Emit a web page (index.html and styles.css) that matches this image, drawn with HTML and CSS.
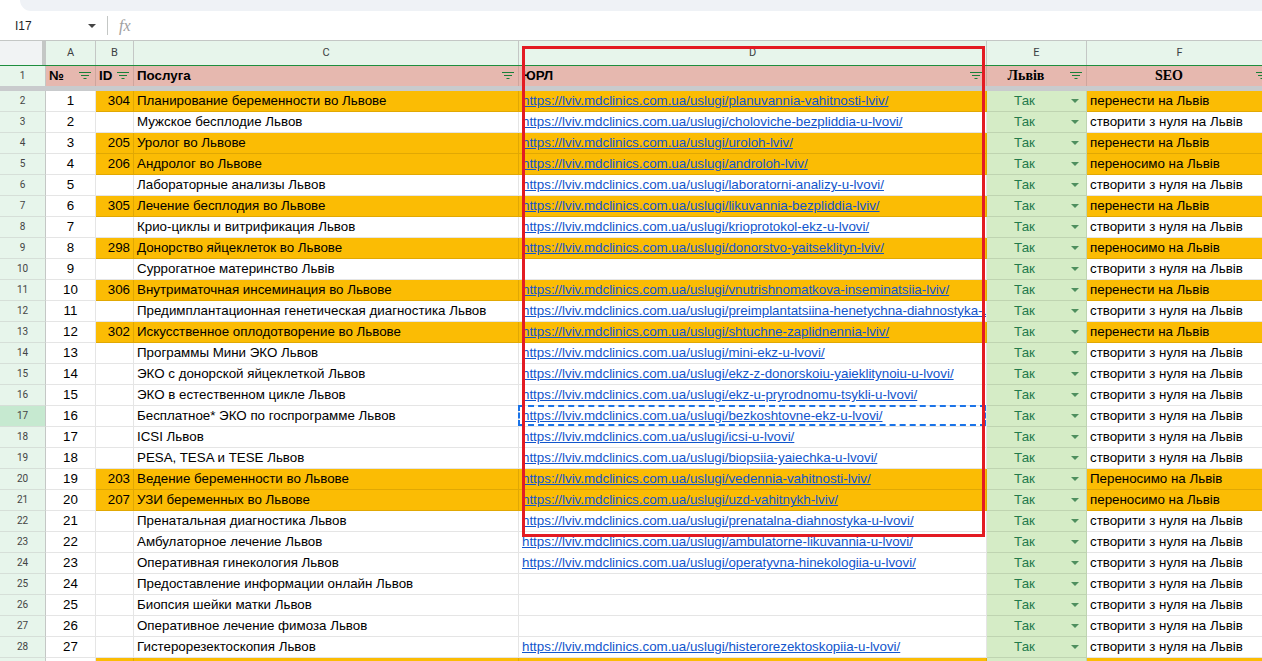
FILE: index.html
```html
<!DOCTYPE html>
<html lang="uk">
<head>
<meta charset="utf-8">
<title>Sheet</title>
<link rel="stylesheet" href="styles.css">
</head>
<body>
<div class="top"><div class="top-strip"></div></div>
<div class="formula-bar">
  <div class="name-box"><span class="cell-ref">I17</span><span class="nb-tri"></span></div>
  <div class="fb-sep"></div>
  <div class="fx">fx</div>
</div>
<div class="sheet">
  <div class="row col-head">
    <div class="corner"></div>
    <div class="ch">A</div><div class="ch">B</div><div class="ch">C</div><div class="ch">D</div><div class="ch">E</div><div class="ch">F</div>
  </div>
  <div class="row r1">
    <div class="rh">1</div>
    <div class="c hc"><span class="ht">№</span><svg class="flt" width="12" height="8" viewBox="0 0 12 8"><path d="M0 0.5H12M2 3.5H10M4.5 6.5H7.5" stroke="#188038" stroke-width="1.2"/></svg></div>
    <div class="c hc"><span class="ht">ID</span><svg class="flt" width="12" height="8" viewBox="0 0 12 8"><path d="M0 0.5H12M2 3.5H10M4.5 6.5H7.5" stroke="#188038" stroke-width="1.2"/></svg></div>
    <div class="c hc"><span class="ht">Послуга</span><svg class="flt" width="12" height="8" viewBox="0 0 12 8"><path d="M0 0.5H12M2 3.5H10M4.5 6.5H7.5" stroke="#188038" stroke-width="1.2"/></svg></div>
    <div class="c hc"><span class="ht">ЮРЛ</span><svg class="flt" width="12" height="8" viewBox="0 0 12 8"><path d="M0 0.5H12M2 3.5H10M4.5 6.5H7.5" stroke="#188038" stroke-width="1.2"/></svg></div>
    <div class="c hc"><span class="ht center serif">Львів</span><svg class="flt" width="12" height="8" viewBox="0 0 12 8"><path d="M0 0.5H12M2 3.5H10M4.5 6.5H7.5" stroke="#188038" stroke-width="1.2"/></svg></div>
    <div class="c hc"><span class="ht center serif">SEO</span><svg class="flt" width="12" height="8" viewBox="0 0 12 8"><path d="M0 0.5H12M2 3.5H10M4.5 6.5H7.5" stroke="#188038" stroke-width="1.2"/></svg></div>
  </div>
  <div class="freeze"></div>

  <div class="row o"><div class="rh">2</div><div class="c a">1</div><div class="c b">304</div><div class="c">Планирование беременности во Львове</div><div class="c d"><a>https://lviv.mdclinics.com.ua/uslugi/planuvannia-vahitnosti-lviv/</a></div><div class="c e"><span class="tak">Так</span><span class="tri"></span></div><div class="c f">перенести на Львів</div></div>
  <div class="row"><div class="rh">3</div><div class="c a">2</div><div class="c b"></div><div class="c">Мужское бесплодие Львов</div><div class="c d"><a>https://lviv.mdclinics.com.ua/uslugi/choloviche-bezpliddia-u-lvovi/</a></div><div class="c e"><span class="tak">Так</span><span class="tri"></span></div><div class="c f">створити з нуля на Львів</div></div>
  <div class="row o"><div class="rh">4</div><div class="c a">3</div><div class="c b">205</div><div class="c">Уролог во Львове</div><div class="c d"><a>https://lviv.mdclinics.com.ua/uslugi/uroloh-lviv/</a></div><div class="c e"><span class="tak">Так</span><span class="tri"></span></div><div class="c f">перенести на Львів</div></div>
  <div class="row o"><div class="rh">5</div><div class="c a">4</div><div class="c b">206</div><div class="c">Андролог во Львове</div><div class="c d"><a>https://lviv.mdclinics.com.ua/uslugi/androloh-lviv/</a></div><div class="c e"><span class="tak">Так</span><span class="tri"></span></div><div class="c f">переносимо на Львів</div></div>
  <div class="row"><div class="rh">6</div><div class="c a">5</div><div class="c b"></div><div class="c">Лабораторные анализы Львов</div><div class="c d"><a>https://lviv.mdclinics.com.ua/uslugi/laboratorni-analizy-u-lvovi/</a></div><div class="c e"><span class="tak">Так</span><span class="tri"></span></div><div class="c f">створити з нуля на Львів</div></div>
  <div class="row o"><div class="rh">7</div><div class="c a">6</div><div class="c b">305</div><div class="c">Лечение бесплодия во Львове</div><div class="c d"><a>https://lviv.mdclinics.com.ua/uslugi/likuvannia-bezpliddia-lviv/</a></div><div class="c e"><span class="tak">Так</span><span class="tri"></span></div><div class="c f">перенести на Львів</div></div>
  <div class="row"><div class="rh">8</div><div class="c a">7</div><div class="c b"></div><div class="c">Крио-циклы и витрификация Львов</div><div class="c d"><a>https://lviv.mdclinics.com.ua/uslugi/krioprotokol-ekz-u-lvovi/</a></div><div class="c e"><span class="tak">Так</span><span class="tri"></span></div><div class="c f">створити з нуля на Львів</div></div>
  <div class="row o"><div class="rh">9</div><div class="c a">8</div><div class="c b">298</div><div class="c">Донорство яйцеклеток во Львове</div><div class="c d"><a>https://lviv.mdclinics.com.ua/uslugi/donorstvo-yaitseklityn-lviv/</a></div><div class="c e"><span class="tak">Так</span><span class="tri"></span></div><div class="c f">переносимо на Львів</div></div>
  <div class="row"><div class="rh">10</div><div class="c a">9</div><div class="c b"></div><div class="c">Суррогатное материнство Львів</div><div class="c d"></div><div class="c e"><span class="tak">Так</span><span class="tri"></span></div><div class="c f">створити з нуля на Львів</div></div>
  <div class="row o"><div class="rh">11</div><div class="c a">10</div><div class="c b">306</div><div class="c">Внутриматочная инсеминация во Львове</div><div class="c d"><a>https://lviv.mdclinics.com.ua/uslugi/vnutrishnomatkova-inseminatsiia-lviv/</a></div><div class="c e"><span class="tak">Так</span><span class="tri"></span></div><div class="c f">перенести на Львів</div></div>
  <div class="row"><div class="rh">12</div><div class="c a">11</div><div class="c b"></div><div class="c">Предимплантационная генетическая диагностика Львов</div><div class="c d"><a>https://lviv.mdclinics.com.ua/uslugi/preimplantatsiina-henetychna-diahnostyka-u-lvovi/</a></div><div class="c e"><span class="tak">Так</span><span class="tri"></span></div><div class="c f">створити з нуля на Львів</div></div>
  <div class="row o"><div class="rh">13</div><div class="c a">12</div><div class="c b">302</div><div class="c">Искусственное оплодотворение во Львове</div><div class="c d"><a>https://lviv.mdclinics.com.ua/uslugi/shtuchne-zaplidnennia-lviv/</a></div><div class="c e"><span class="tak">Так</span><span class="tri"></span></div><div class="c f">перенести на Львів</div></div>
  <div class="row"><div class="rh">14</div><div class="c a">13</div><div class="c b"></div><div class="c">Программы Мини ЭКО Львов</div><div class="c d"><a>https://lviv.mdclinics.com.ua/uslugi/mini-ekz-u-lvovi/</a></div><div class="c e"><span class="tak">Так</span><span class="tri"></span></div><div class="c f">створити з нуля на Львів</div></div>
  <div class="row"><div class="rh">15</div><div class="c a">14</div><div class="c b"></div><div class="c">ЭКО с донорской яйцеклеткой Львов</div><div class="c d"><a>https://lviv.mdclinics.com.ua/uslugi/ekz-z-donorskoiu-yaieklitynoiu-u-lvovi/</a></div><div class="c e"><span class="tak">Так</span><span class="tri"></span></div><div class="c f">створити з нуля на Львів</div></div>
  <div class="row"><div class="rh">16</div><div class="c a">15</div><div class="c b"></div><div class="c">ЭКО в естественном цикле Львов</div><div class="c d"><a>https://lviv.mdclinics.com.ua/uslugi/ekz-u-pryrodnomu-tsykli-u-lvovi/</a></div><div class="c e"><span class="tak">Так</span><span class="tri"></span></div><div class="c f">створити з нуля на Львів</div></div>
  <div class="row"><div class="rh active">17</div><div class="c a">16</div><div class="c b"></div><div class="c">Бесплатное* ЭКО по госпрограмме Львов</div><div class="c d copied"><a>https://lviv.mdclinics.com.ua/uslugi/bezkoshtovne-ekz-u-lvovi/</a><span class="marquee"></span></div><div class="c e"><span class="tak">Так</span><span class="tri"></span></div><div class="c f">створити з нуля на Львів</div></div>
  <div class="row"><div class="rh">18</div><div class="c a">17</div><div class="c b"></div><div class="c">ICSI Львов</div><div class="c d"><a>https://lviv.mdclinics.com.ua/uslugi/icsi-u-lvovi/</a></div><div class="c e"><span class="tak">Так</span><span class="tri"></span></div><div class="c f">створити з нуля на Львів</div></div>
  <div class="row"><div class="rh">19</div><div class="c a">18</div><div class="c b"></div><div class="c">PESA, TESA и TESE Львов</div><div class="c d"><a>https://lviv.mdclinics.com.ua/uslugi/biopsiia-yaiechka-u-lvovi/</a></div><div class="c e"><span class="tak">Так</span><span class="tri"></span></div><div class="c f">створити з нуля на Львів</div></div>
  <div class="row o"><div class="rh">20</div><div class="c a">19</div><div class="c b">203</div><div class="c">Ведение беременности во Львове</div><div class="c d"><a>https://lviv.mdclinics.com.ua/uslugi/vedennia-vahitnosti-lviv/</a></div><div class="c e"><span class="tak">Так</span><span class="tri"></span></div><div class="c f">Переносимо на Львів</div></div>
  <div class="row o"><div class="rh">21</div><div class="c a">20</div><div class="c b">207</div><div class="c">УЗИ беременных во Львове</div><div class="c d"><a>https://lviv.mdclinics.com.ua/uslugi/uzd-vahitnykh-lviv/</a></div><div class="c e"><span class="tak">Так</span><span class="tri"></span></div><div class="c f">переносимо на Львів</div></div>
  <div class="row"><div class="rh">22</div><div class="c a">21</div><div class="c b"></div><div class="c">Пренатальная диагностика Львов</div><div class="c d"><a>https://lviv.mdclinics.com.ua/uslugi/prenatalna-diahnostyka-u-lvovi/</a></div><div class="c e"><span class="tak">Так</span><span class="tri"></span></div><div class="c f">створити з нуля на Львів</div></div>
  <div class="row"><div class="rh">23</div><div class="c a">22</div><div class="c b"></div><div class="c">Амбулаторное лечение Львов</div><div class="c d"><a>https://lviv.mdclinics.com.ua/uslugi/ambulatorne-likuvannia-u-lvovi/</a></div><div class="c e"><span class="tak">Так</span><span class="tri"></span></div><div class="c f">створити з нуля на Львів</div></div>
  <div class="row"><div class="rh">24</div><div class="c a">23</div><div class="c b"></div><div class="c">Оперативная гинекология Львов</div><div class="c d"><a>https://lviv.mdclinics.com.ua/uslugi/operatyvna-hinekologiia-u-lvovi/</a></div><div class="c e"><span class="tak">Так</span><span class="tri"></span></div><div class="c f">створити з нуля на Львів</div></div>
  <div class="row"><div class="rh">25</div><div class="c a">24</div><div class="c b"></div><div class="c">Предоставление информации онлайн Львов</div><div class="c d"></div><div class="c e"><span class="tak">Так</span><span class="tri"></span></div><div class="c f">створити з нуля на Львів</div></div>
  <div class="row"><div class="rh">26</div><div class="c a">25</div><div class="c b"></div><div class="c">Биопсия шейки матки Львов</div><div class="c d"></div><div class="c e"><span class="tak">Так</span><span class="tri"></span></div><div class="c f">створити з нуля на Львів</div></div>
  <div class="row"><div class="rh">27</div><div class="c a">26</div><div class="c b"></div><div class="c">Оперативное лечение фимоза Львов</div><div class="c d"></div><div class="c e"><span class="tak">Так</span><span class="tri"></span></div><div class="c f">створити з нуля на Львів</div></div>
  <div class="row"><div class="rh">28</div><div class="c a">27</div><div class="c b"></div><div class="c">Гистерорезектоскопия Львов</div><div class="c d"><a>https://lviv.mdclinics.com.ua/uslugi/histerorezektoskopiia-u-lvovi/</a></div><div class="c e"><span class="tak">Так</span><span class="tri"></span></div><div class="c f">створити з нуля на Львів</div></div>
  <div class="row o"><div class="rh"></div><div class="c a"></div><div class="c b"></div><div class="c"></div><div class="c d"></div><div class="c e"></div><div class="c f"></div></div>

  <div class="red-box"></div>
</div>
</body>
</html>
```
FILE: styles.css
```css
html, body {
  margin: 0;
  padding: 0;
}
body {
  width: 1262px;
  height: 661px;
  overflow: hidden;
  background: #fff;
  font-family: "Liberation Sans", Arial, sans-serif;
  font-size: 13.33px;
  color: #000;
}

.top {
  height: 11px;
  background: #fff;
}
.top-strip {
  height: 11px;
  margin-left: 20px;
  background: #eff2f6;
  border-bottom-left-radius: 22px;
}

.formula-bar {
  height: 29px;
  border-bottom: 1px solid #c4c7c5;
  display: flex;
  align-items: center;
}
.name-box {
  width: 107px;
  display: flex;
  align-items: center;
  padding-left: 15px;
  box-sizing: border-box;
}
.cell-ref {
  font-size: 12px;
  color: #1f1f1f;
  flex: 1;
}
.nb-tri {
  width: 0;
  height: 0;
  border-left: 4px solid transparent;
  border-right: 4px solid transparent;
  border-top: 4px solid #444;
  margin-right: 11px;
}
.fb-sep {
  width: 1px;
  height: 19px;
  background: #c4c7c5;
}
.fx {
  margin-left: 11px;
  font-family: "Liberation Serif", serif;
  font-style: italic;
  font-size: 16px;
  color: #a0a0a0;
}

.sheet {
  position: relative;
}
.row {
  display: grid;
  grid-template-columns: 46px 50px 38px 385px 468px 100px 186px;
  height: 21px;
}
.c {
  box-sizing: border-box;
  height: 21px;
  line-height: 20px;
  border-right: 1px solid rgba(0, 0, 0, 0.1);
  border-bottom: 1px solid rgba(0, 0, 0, 0.1);
  padding: 0 3px;
  white-space: nowrap;
  overflow: hidden;
  background: #fff;
}
.rh {
  box-sizing: border-box;
  height: 21px;
  line-height: 20px;
  background: #e7f5eb;
  border-right: 1px solid #c4c7c5;
  border-bottom: 1px solid #d6dfd8;
  text-align: center;
  font-family: Roboto, "Liberation Sans", sans-serif;
  font-size: 10px;
  color: #444;
}
.rh.active {
  background: #c6e9d0;
}

.col-head {
  height: 24px;
  border-bottom: 1px solid #1e8e3e;
  grid-template-rows: 24px;
}
.corner {
  background: #f1f3f4;
  border-right: 4px solid #c4c7c5;
}
.ch {
  box-sizing: border-box;
  background: #e7f5eb;
  border-right: 1px solid #c4c7c5;
  text-align: center;
  line-height: 24px;
  font-family: Roboto, "Liberation Sans", sans-serif;
  font-size: 11px;
  color: #3c4043;
}

.r1 {
  height: 20px;
}
.r1 .rh {
  height: 20px;
  line-height: 20px;
  border-bottom: none;
}
.hc {
  height: 20px;
  border-bottom: none;
  background: #e6b8af;
  display: flex;
  align-items: center;
  font-weight: bold;
  padding-right: 4px;
}
.ht {
  flex: 1;
}
.ht.center {
  text-align: center;
  padding-right: 8px;
}
.serif {
  font-family: "Liberation Serif", "Times New Roman", serif;
  font-size: 14px;
}
.flt {
  flex: none;
  display: block;
}

.freeze {
  height: 5px;
  background: #c9cbcd;
}

.a {
  text-align: center;
}
.b {
  text-align: right;
}
.d a {
  color: #1155cc;
  text-decoration: underline;
}
.e {
  background: #d5ecc6;
  display: flex;
  align-items: center;
  padding-right: 7px;
}
.tak {
  flex: 1;
  text-align: center;
  padding-right: 12px;
  color: #237a4b;
}
.tri {
  flex: none;
  width: 0;
  height: 0;
  border-left: 4px solid transparent;
  border-right: 4px solid transparent;
  border-top: 4px solid #4e8f5e;
}

.o .b,
.o .c:nth-child(4),
.o .d,
.o .f {
  background: #fbbc04;
}

.copied {
  position: relative;
  overflow: visible;
}
.marquee {
  position: absolute;
  left: -1px;
  top: -1px;
  right: 0;
  bottom: 0;
  border: 2px dashed #1a73e8;
  pointer-events: none;
}

.red-box {
  position: absolute;
  left: 522px;
  top: 5px;
  width: 463px;
  height: 491px;
  box-sizing: border-box;
  border: 3px solid #e31b23;
  pointer-events: none;
}
```
